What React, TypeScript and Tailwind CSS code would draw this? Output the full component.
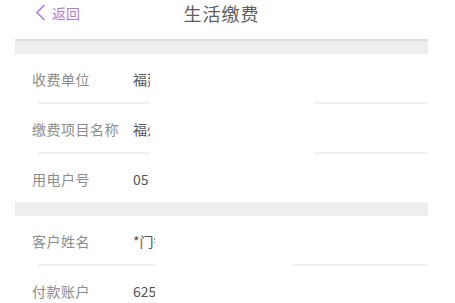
import React from 'react'

type Row = { label: string; value: string; clip: string }

function FieldRow({ label, value, clip }: Row) {
  return (
    <div className="flex h-[48px] items-center pt-[2px]">
      <div className="w-[118px] pl-[17px] text-[14px] tracking-[0.5px] text-[#8c8c8c]">{label}</div>
      <div className={`${clip} overflow-hidden whitespace-nowrap text-[14px] text-[#555555]`}>{value}</div>
    </div>
  )
}

function Divider({ leftW, rightW }: { leftW: string; rightW: string }) {
  return (
    <div className="flex h-[2px]">
      <div className={`ml-[23px] ${leftW} h-[2px] bg-[#f1f1f1]`} />
      <div className={`ml-auto ${rightW} h-[2px] bg-[#f1f1f1]`} />
    </div>
  )
}

export default function App() {
  return (
    <div
      className="h-[303px] w-[455px] overflow-hidden bg-white"
      style={{ fontFamily: '"Noto Sans CJK SC", "Noto Sans", sans-serif' }}
    >
      <div className="ml-[15px] w-[413px]">
        {/* Header */}
        <div className="grid h-[39px] grid-cols-[1fr_auto_1fr] items-center pb-[14px]">
          <div className="flex items-center pl-[20px] text-[#b57ad6]">
            <svg width="11" height="17" viewBox="0 0 11 17" fill="none">
              <path d="M9.5 1 L2 8.5 L9.5 16" stroke="currentColor" strokeWidth="1.6" />
            </svg>
            <span className="ml-[6px] text-[14px] leading-none">返回</span>
          </div>
          <div className="text-[18px] leading-none tracking-[1px] text-[#5e5e5e]">生活缴费</div>
          <div />
        </div>

        <div className="h-[15px] border-t-2 border-[#dcdcdc] bg-[#ededed]" />

        <FieldRow label="收费单位" value="福建省电力有限公司" clip="w-[17px]" />
        <Divider leftW="w-[112px]" rightW="w-[114px]" />
        <FieldRow label="缴费项目名称" value="福州电费" clip="w-[17px]" />
        <Divider leftW="w-[112px]" rightW="w-[114px]" />
        <FieldRow label="用电户号" value="05" clip="w-[17px]" />

        <div className="h-[14px] border-y border-[#f3f3f3] bg-[#ededed]" />

        <FieldRow label="客户姓名" value="*门锋" clip="w-[22px]" />
        <Divider leftW="w-[117px]" rightW="w-[136px]" />
        <FieldRow label="付款账户" value="6258091234567890" clip="w-[22px]" />
      </div>
    </div>
  )
}
